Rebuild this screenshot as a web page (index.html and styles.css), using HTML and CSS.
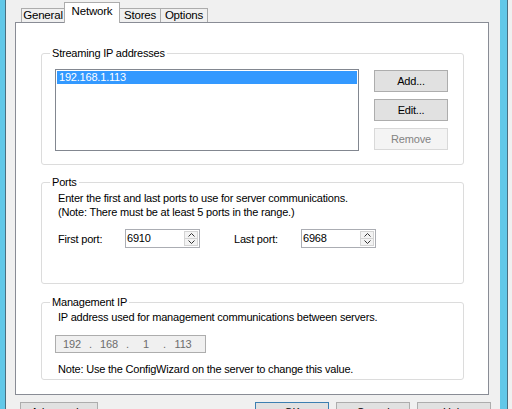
FILE: index.html
```html
<!DOCTYPE html>
<html>
<head>
<meta charset="utf-8">
<link rel="stylesheet" href="styles.css">
</head>
<body>
<div class="window">
  <div class="frame frame-l"></div>
  <div class="main">
    <div class="tabs">
      <div class="tab t-general">General</div>
      <div class="tab t-network active">Network</div>
      <div class="tab t-stores">Stores</div>
      <div class="tab t-options">Options</div>
    </div>
    <div class="panel">
      <fieldset class="group g-stream">
        <legend>Streaming IP addresses</legend>
        <div class="stream-row">
          <div class="listbox">
            <div class="list-item selected">192.168.1.113</div>
          </div>
          <div class="side-buttons">
            <button class="btn">Add...</button>
            <button class="btn">Edit...</button>
            <button class="btn disabled">Remove</button>
          </div>
        </div>
      </fieldset>
      <fieldset class="group g-ports">
        <legend>Ports</legend>
        <div class="text">Enter the first and last ports to use for server communications.</div>
        <div class="text">(Note: There must be at least 5 ports in the range.)</div>
        <div class="port-row">
          <span class="port-label">First port:</span>
          <div class="spin">
            <span class="spin-value">6910</span>
            <div class="spin-btns">
              <span class="spin-btn"><svg width="7" height="4" viewBox="0 0 7 4"><path d="M0.5 3.5 L3.5 0.5 L6.5 3.5" fill="none" stroke="#333" stroke-width="1"/></svg></span>
              <span class="spin-btn"><svg width="7" height="4" viewBox="0 0 7 4"><path d="M0.5 0.5 L3.5 3.5 L6.5 0.5" fill="none" stroke="#333" stroke-width="1"/></svg></span>
            </div>
          </div>
          <span class="port-label second">Last port:</span>
          <div class="spin">
            <span class="spin-value">6968</span>
            <div class="spin-btns">
              <span class="spin-btn"><svg width="7" height="4" viewBox="0 0 7 4"><path d="M0.5 3.5 L3.5 0.5 L6.5 3.5" fill="none" stroke="#333" stroke-width="1"/></svg></span>
              <span class="spin-btn"><svg width="7" height="4" viewBox="0 0 7 4"><path d="M0.5 0.5 L3.5 3.5 L6.5 0.5" fill="none" stroke="#333" stroke-width="1"/></svg></span>
            </div>
          </div>
        </div>
      </fieldset>
      <fieldset class="group g-mgmt">
        <legend>Management IP</legend>
        <div class="text">IP address used for management communications between servers.</div>
        <div class="ipbox">
          <span class="seg">192</span><span class="dot">.</span><span class="seg">168</span><span class="dot">.</span><span class="seg">1</span><span class="dot">.</span><span class="seg">113</span>
        </div>
        <div class="text note">Note: Use the ConfigWizard on the server to change this value.</div>
      </fieldset>
    </div>
    <div class="footer">
      <button class="btn fbtn adv">Advanced...</button>
      <div class="spacer"></div>
      <button class="btn fbtn ok">OK</button>
      <button class="btn fbtn">Cancel</button>
      <button class="btn fbtn">Help</button>
    </div>
  </div>
  <div class="frame frame-r"></div>
</div>
</body>
</html>
```

FILE: styles.css
```css
* { box-sizing: border-box; }
html, body {
  margin: 0;
  padding: 0;
  width: 512px;
  height: 409px;
  overflow: hidden;
  background: #f0f0f0;
  font-family: "Liberation Sans", Arial, sans-serif;
  font-size: 11px;
  letter-spacing: -0.2px;
  color: #000;
}
.window {
  display: flex;
  width: 512px;
  height: 409px;
  overflow: hidden;
}
.frame {
  background: #62c8e8;
  flex: none;
}
.frame-l {
  width: 6px;
  border-right: 1px solid #4b6f80;
}
.frame-r {
  width: 8px;
  border-right: 1px solid #4b6f80;
}
.main {
  width: 494px;
  flex: none;
  display: flex;
  flex-direction: column;
}
.main > * { flex: none; }
.tabs {
  display: flex;
  align-items: flex-end;
  height: 22px;
  padding-left: 15px;
  position: relative;
  z-index: 2;
}
.tab {
  height: 14px;
  border: 1px solid #acacac;
  border-bottom: none;
  background: #f0f0f0;
  text-align: center;
  line-height: 12px;
  margin-left: -1px;
  font-size: 11.5px;
}
.tab:first-child { margin-left: 0; }
.t-general { width: 44px; }
.t-network { width: 56px; }
.t-stores { width: 42px; }
.t-options { width: 48px; }
.tab.active {
  height: 21px;
  margin-bottom: -1px;
  background: #fff;
  line-height: 17px;
  position: relative;
  z-index: 3;
}
.panel {
  margin-left: 9px;
  width: 474px;
  height: 373px;
  border: 1px solid #898c95;
  background: #fff;
  padding: 23px 24px 0 25px;
  display: flex;
  flex-direction: column;
}
.panel > * { flex: none; }
.group {
  margin: 0;
  border: 1px solid #dcdcdc;
  border-radius: 3px;
  padding: 0 13px;
  min-width: 0;
}
.group legend {
  margin-left: -5px;
  padding: 0 2px;
  line-height: 14px;
  height: 14px;
}
.g-stream { padding-top: 9px; padding-bottom: 13px; }
.g-ports { margin-top: 10px; padding-top: 2px; padding-bottom: 35px; }
.g-mgmt { margin-top: 11px; padding-top: 1px; padding-bottom: 3px; }
.stream-row {
  display: flex;
  gap: 15px;
}
.listbox {
  width: 304px;
  height: 82px;
  border: 1px solid #828790;
  padding: 1px;
}
.list-item {
  height: 13px;
  line-height: 13px;
  padding-left: 2px;
}
.list-item.selected {
  background: #3399ff;
  color: #fff;
}
.side-buttons {
  display: flex;
  flex-direction: column;
  gap: 7px;
  padding-top: 1px;
}
.btn {
  font-family: inherit;
  font-size: 11px;
  letter-spacing: -0.2px;
  color: #000;
  width: 74px;
  height: 22px;
  padding: 0;
  margin: 0;
  background: #e1e1e1;
  border: 1px solid #adadad;
  border-radius: 0;
}
.btn.disabled {
  background: #f4f4f4;
  border-color: #d9d9d9;
  color: #838383;
}
.text {
  line-height: 14px;
  padding-left: 3px;
}
.port-row {
  display: flex;
  align-items: center;
  margin-top: 10px;
  padding-left: 3px;
  height: 19px;
}
.port-label {
  width: 67px;
}
.port-label.second {
  margin-left: 34px;
}
.spin {
  width: 75px;
  height: 19px;
  border: 1px solid #abadb3;
  display: flex;
  background: #fff;
}
.spin-value {
  flex: 1;
  line-height: 17px;
  padding-left: 1px;
}
.spin-btns {
  width: 16px;
  display: flex;
  flex-direction: column;
  padding: 1px;
}
.spin-btn {
  flex: 1;
  border: 1px solid #d4d4d4;
  background: #f3f3f3;
  display: flex;
  align-items: center;
  justify-content: center;
}
.spin-btn + .spin-btn { border-top: none; }
.ipbox {
  width: 151px;
  height: 18px;
  margin-top: 11px;
  border: 1px solid #adadad;
  background: #f0f0f0;
  color: #6d6d6d;
  display: flex;
  line-height: 16px;
}
.seg {
  width: 32px;
  text-align: center;
}
.dot {
  width: 5px;
  text-align: center;
}
.note {
  margin-top: 9px;
}
.footer {
  display: flex;
  padding: 7px 9px 0 14px;
  gap: 7px;
}
.fbtn {
  height: 23px;
  flex: none;
  padding-bottom: 4px;
}
.adv { width: 78px; }
.spacer { flex: 1; }
.ok { border-color: #3c7fb1; }
```
